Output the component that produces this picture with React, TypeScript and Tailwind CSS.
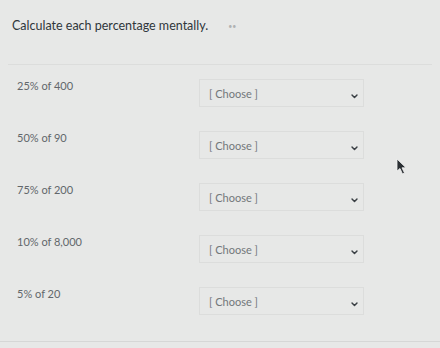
import React from "react";

const rows = ["25% of 400", "50% of 90", "75% of 200", "10% of 8,000", "5% of 20"];

function Chevron() {
  return (
    <svg width="7" height="5" viewBox="0 0 7 5" className="text-[#3a3f44]">
      <path d="M1 1 L3.5 3.6 L6 1" fill="none" stroke="currentColor" strokeWidth="1.4" strokeLinecap="round" strokeLinejoin="round" />
    </svg>
  );
}

export default function App() {
  return (
    <div
      className="relative w-[440px] h-[348px] overflow-hidden bg-[#e7e8e7] text-[#3b4247]"
      style={{ fontFamily: "Lato, 'Open Sans', sans-serif" }}
    >
      <div className="pl-[12px] pt-[17px] h-[64px] flex items-start gap-[20px]">
        <span className="text-[12.5px] leading-[18px] text-[#2f363b]">Calculate each percentage mentally.</span>
        <span className="mt-[4px] text-[7px] text-[#b0b2b2]">••</span>
      </div>
      <div className="border-t border-[#dcdddc] mx-[8px] pt-[5px]">
        {rows.map((r) => (
          <div key={r} className="h-[52px] flex items-start">
            <div className="w-[191px] pl-[9px] pt-[9px] text-[11px] leading-[14px] text-[#62676b]">{r}</div>
            <div className="mt-[9px] w-[165px] h-[28px] border border-[#dcdddc] flex items-center justify-between pl-[9px] pr-[5px]">
              <span className="text-[11px] leading-[14px] text-[#72777a] pt-[1px]">[ Choose ]</span>
              <span className="mt-[6px]"><Chevron /></span>
            </div>
          </div>
        ))}
      </div>
      <div className="absolute left-0 right-0 top-[341px] border-t border-[#d6d7d6]" />
      <svg className="absolute left-[396px] top-[158px]" width="12" height="18" viewBox="0 0 12 18">
        <path d="M1 1 L1 13 L4 10.5 L6.5 16 L8.5 15 L6 9.8 L10 9.8 Z" fill="#2b2f33" stroke="#f2f2f2" strokeWidth="0.8" />
      </svg>
    </div>
  );
}
